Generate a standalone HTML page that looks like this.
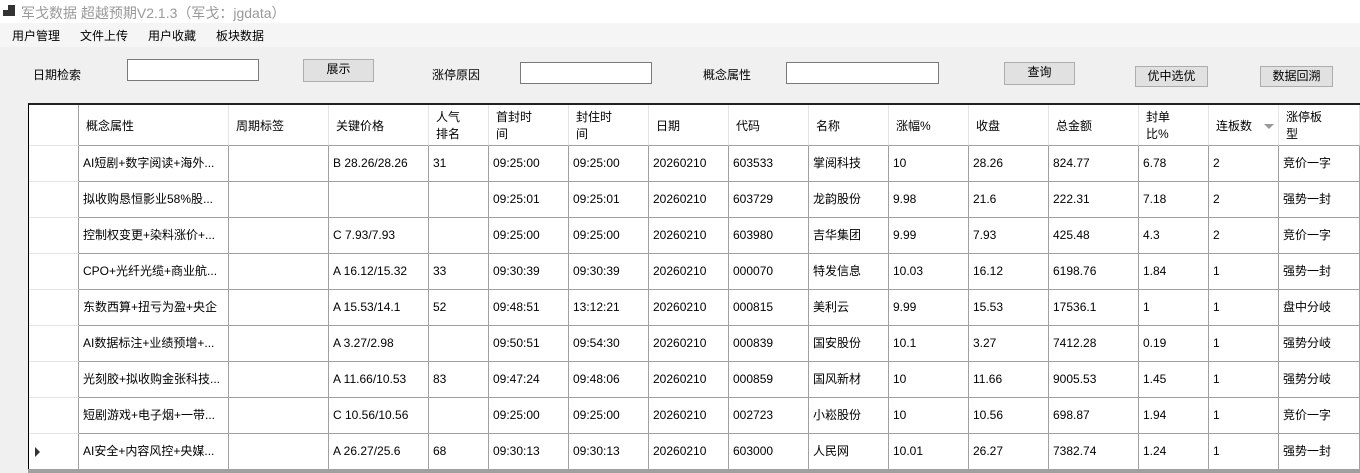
<!DOCTYPE html><html><head><meta charset="utf-8"><style>
*{box-sizing:border-box;margin:0;padding:0}
body{width:1360px;height:473px;overflow:hidden;background:#f0f0f0;font-family:"Liberation Sans","Noto Sans CJK SC",sans-serif;font-size:12px;color:#000;position:relative}
.abs{position:absolute}
.menu{left:0;top:23px;width:1360px;height:24px;background:#f5f5f5}
.menu span{position:absolute;top:4px;font-size:12px}
.tb{background:#fff;border:1px solid #7a7a7a;height:22px}
.btn{background:#e1e1e1;border:1px solid #adadad;text-align:center;line-height:19px}
.grid{left:28px;top:103px;width:1332px;height:370px;border-left:1px solid #000;border-top:2px solid #222;background:#fff}
.row{display:flex;height:36px}
.c{border-right:1px solid #a0a0a0;border-bottom:1px solid #a0a0a0;padding:0 4px;line-height:35px;white-space:nowrap;overflow:hidden}
.h .c{border-right:1px solid #e4e4e4;border-bottom:1px solid #a0a0a0;line-height:17px;padding:2px 7px 0;display:flex;align-items:center}
.c:first-child{border-right:1px solid #a0a0a0;border-bottom-color:#e4e4e4}
</style></head><body>
<div class="abs" style="left:0;top:0;width:1360px;height:23px;background:#fff"></div>
<svg class="abs" style="left:3px;top:5px" width="14" height="13"><rect x="0" y="5" width="5" height="6" fill="#333"/><rect x="5" y="0" width="7" height="11" fill="#333"/></svg>
<div class="abs" style="left:21px;top:3px;color:#999;font-size:14px">军戈数据 超越预期V2.1.3（军戈：jgdata）</div>
<div class="abs menu"><span style="left:12px">用户管理</span><span style="left:80px">文件上传</span><span style="left:148px">用户收藏</span><span style="left:216px">板块数据</span></div>
<div class="abs" style="left:33px;top:66px">日期检索</div>
<div class="abs tb" style="left:127px;top:59px;width:132px"></div>
<div class="abs btn" style="left:303px;top:59px;width:71px;height:23px">展示</div>
<div class="abs" style="left:432px;top:66px">涨停原因</div>
<div class="abs tb" style="left:520px;top:62px;width:132px"></div>
<div class="abs" style="left:703px;top:66px">概念属性</div>
<div class="abs tb" style="left:786px;top:62px;width:153px"></div>
<div class="abs btn" style="left:1004px;top:62px;width:71px;height:23px">查询</div>
<div class="abs btn" style="left:1135px;top:66px;width:73px;height:21px">优中选优</div>
<div class="abs btn" style="left:1260px;top:66px;width:73px;height:21px">数据回溯</div>
<div class="abs grid">
<div class="row h" style="height:41px">
<div class="c" style="width:50px"></div><div class="c" style="width:150px">概念属性</div><div class="c" style="width:100px">周期标签</div><div class="c" style="width:100px">关键价格</div><div class="c" style="width:60px">人气<br>排名</div><div class="c" style="width:80px">首封时<br>间</div><div class="c" style="width:80px">封住时<br>间</div><div class="c" style="width:80px">日期</div><div class="c" style="width:80px">代码</div><div class="c" style="width:80px">名称</div><div class="c" style="width:80px">涨幅%</div><div class="c" style="width:80px">收盘</div><div class="c" style="width:90px">总金额</div><div class="c" style="width:70px">封单<br>比%</div><div class="c" style="width:70px">连板数<span style="margin-left:12px;border-left:5px solid transparent;border-right:5px solid transparent;border-top:5px solid #999"></span></div><div class="c" style="width:81px">涨停板<br>型</div>
</div>
<div id="rows"></div>
</div>
<script>
var d=[
["AI短剧+数字阅读+海外...","","B 28.26/28.26","31","09:25:00","09:25:00","20260210","603533","掌阅科技","10","28.26","824.77","6.78","2","竞价一字"],
["拟收购恳恒影业58%股...","","","","09:25:01","09:25:01","20260210","603729","龙韵股份","9.98","21.6","222.31","7.18","2","强势一封"],
["控制权变更+染料涨价+...","","C 7.93/7.93","","09:25:00","09:25:00","20260210","603980","吉华集团","9.99","7.93","425.48","4.3","2","竞价一字"],
["CPO+光纤光缆+商业航...","","A 16.12/15.32","33","09:30:39","09:30:39","20260210","000070","特发信息","10.03","16.12","6198.76","1.84","1","强势一封"],
["东数西算+扭亏为盈+央企","","A 15.53/14.1","52","09:48:51","13:12:21","20260210","000815","美利云","9.99","15.53","17536.1","1","1","盘中分岐"],
["AI数据标注+业绩预增+...","","A 3.27/2.98","","09:50:51","09:54:30","20260210","000839","国安股份","10.1","3.27","7412.28","0.19","1","强势分岐"],
["光刻胶+拟收购金张科技...","","A 11.66/10.53","83","09:47:24","09:48:06","20260210","000859","国风新材","10","11.66","9005.53","1.45","1","强势分岐"],
["短剧游戏+电子烟+一带...","","C 10.56/10.56","","09:25:00","09:25:00","20260210","002723","小崧股份","10","10.56","698.87","1.94","1","竞价一字"],
["AI安全+内容风控+央媒...","","A 26.27/25.6","68","09:30:13","09:30:13","20260210","603000","人民网","10.01","26.27","7382.74","1.24","1","强势一封"]];
var w=[150,100,100,60,80,80,80,80,80,80,80,90,70,70,81],h="";
d.forEach(function(r,i){h+='<div class="row"><div class="c" style="width:50px;padding-left:6px">'+(i==8?'<span style="display:inline-block;border-top:5px solid transparent;border-bottom:5px solid transparent;border-left:5px solid #333;vertical-align:middle"></span>':'')+'</div>';r.forEach(function(v,j){h+='<div class="c" style="width:'+w[j]+'px">'+v+'</div>'});h+='</div>'});
document.getElementById('rows').innerHTML=h;
</script>
<div class="abs" style="left:28px;top:469px;width:1332px;height:4px;background:#a0a0a0"></div>
</body></html>
